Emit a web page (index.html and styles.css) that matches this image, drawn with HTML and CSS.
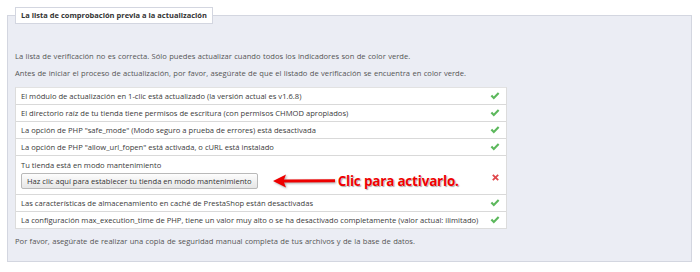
FILE: index.html
```html
<!DOCTYPE html>
<html lang="es">
<head>
<meta charset="utf-8">
<link rel="stylesheet" href="styles.css">
</head>
<body>
<fieldset class="panel">
  <legend class="legend">La lista de comprobación previa a la actualización</legend>
  <p class="msg msg-first">La lista de verificación no es correcta. Sólo puedes actualizar cuando todos los indicadores son de color verde.</p>
  <p class="msg">Antes de iniciar el proceso de actualización, por favor, asegúrate de que el listado de verificación se encuentra en color verde.</p>
  <div class="checklist">
    <div class="row">
      <span class="label">El módulo de actualización en 1-clic está actualizado (la versión actual es v1.6.8)</span>
      <svg class="ok" viewBox="0 0 10 8"><path d="M0.6 4.3 L2.2 2.8 L3.8 4.4 L7.9 0.3 L9.4 1.8 L3.8 7.4 Z"/></svg>
    </div>
    <div class="row">
      <span class="label">El directorio raíz de tu tienda tiene permisos de escritura (con permisos CHMOD apropiados)</span>
      <svg class="ok" viewBox="0 0 10 8"><path d="M0.6 4.3 L2.2 2.8 L3.8 4.4 L7.9 0.3 L9.4 1.8 L3.8 7.4 Z"/></svg>
    </div>
    <div class="row">
      <span class="label">La opción de PHP "safe_mode" (Modo seguro a prueba de errores) está desactivada</span>
      <svg class="ok" viewBox="0 0 10 8"><path d="M0.6 4.3 L2.2 2.8 L3.8 4.4 L7.9 0.3 L9.4 1.8 L3.8 7.4 Z"/></svg>
    </div>
    <div class="row">
      <span class="label">La opción de PHP "allow_url_fopen" está activada, o cURL está instalado</span>
      <svg class="ok" viewBox="0 0 10 8"><path d="M0.6 4.3 L2.2 2.8 L3.8 4.4 L7.9 0.3 L9.4 1.8 L3.8 7.4 Z"/></svg>
    </div>
    <div class="row row-tall">
      <div class="label-block">
        <span class="label">Tu tienda está en modo mantenimiento</span>
        <div class="action">
          <button class="btn" type="button">Haz clic aquí para establecer tu tienda en modo mantenimiento</button>
          <svg class="arrow" viewBox="0 0 62 14"><path d="M0 7 L13 0.5 L11 5.6 L62 5.2 L62 8.2 L11 8.6 L13 13.5 Z"/></svg>
          <span class="callout">Clic para activarlo.</span>
        </div>
      </div>
      <svg class="ko" viewBox="0 0 8 8"><path d="M1.6 0.2 L4 2.6 L6.4 0.2 L7.8 1.6 L5.4 4 L7.8 6.4 L6.4 7.8 L4 5.4 L1.6 7.8 L0.2 6.4 L2.6 4 L0.2 1.6 Z"/></svg>
    </div>
    <div class="row">
      <span class="label">Las características de almacenamiento en caché de PrestaShop están desactivadas</span>
      <svg class="ok" viewBox="0 0 10 8"><path d="M0.6 4.3 L2.2 2.8 L3.8 4.4 L7.9 0.3 L9.4 1.8 L3.8 7.4 Z"/></svg>
    </div>
    <div class="row">
      <span class="label">La configuración max_execution_time de PHP, tiene un valor muy alto o se ha desactivado completamente (valor actual: ilimitado)</span>
      <svg class="ok" viewBox="0 0 10 8"><path d="M0.6 4.3 L2.2 2.8 L3.8 4.4 L7.9 0.3 L9.4 1.8 L3.8 7.4 Z"/></svg>
    </div>
  </div>
  <p class="msg msg-last">Por favor, asegúrate de realizar una copia de seguridad manual completa de tus archivos y de la base de datos.</p>
</fieldset>
</body>
</html>
```
FILE: styles.css
```css
html, body {
  margin: 0;
  padding: 0;
  background: #ffffff;
}
body {
  font-family: "Open Sans", "DejaVu Sans", sans-serif;
  font-size: 7.6px;
  color: #555555;
  padding: 7px 8px 0 7px;
}
.panel {
  margin: 0;
  min-width: 0;
  border: 1px solid #d3d6e0;
  background: #ebedf4;
  padding: 10px 7px 12px 7px;
  height: 255px;
  box-sizing: border-box;
}
.legend {
  background: #ffffff;
  border: 1px solid #d3d6e0;
  padding: 0 5px;
  margin-left: 0;
  height: 17px;
  line-height: 15px;
  box-sizing: border-box;
  font-size: 7.5px;
  font-weight: 700;
  color: #333333;
}
.msg {
  margin: 0;
  line-height: 17px;
  word-spacing: 0.4px;
}
.msg-first {
  margin-top: 14px;
}
.msg-last {
  margin-top: 4px;
}
.checklist {
  width: 490px;
  margin-top: 5px;
  background: #ffffff;
  border: 1px solid #dcdcdc;
  border-top: 1px solid #e2e2e2;
}
.row {
  display: flex;
  align-items: center;
  justify-content: space-between;
  height: 16px;
  padding: 0 6px 0 5px;
  border-top: 1px solid #d9d9d9;
  color: #3a3a3a;
  white-space: nowrap;
}
.row:first-child {
  border-top: none;
}
.row-tall {
  height: 38px;
}
.label-block {
  display: flex;
  flex-direction: column;
  gap: 2px;
}
.action {
  display: flex;
  align-items: center;
}
.btn {
  font-family: "Open Sans", "DejaVu Sans", sans-serif;
  font-size: 7.6px;
  color: #333333;
  height: 16px;
  padding: 0 5px;
  border: 1px solid #b9b9b9;
  border-radius: 2px;
  background: linear-gradient(#fdfdfd, #e6e6e6);
  line-height: 14px;
  white-space: nowrap;
}
.arrow {
  width: 62px;
  height: 14px;
  margin-left: 15px;
  fill: #ee0000;
  filter: drop-shadow(1px 1px 1px rgba(0,0,0,0.35));
}
.callout {
  margin-left: 3px;
  font-family: "Open Sans", "DejaVu Sans", sans-serif;
  font-weight: 700;
  font-size: 13.5px;
  letter-spacing: -0.2px;
  color: #ee0000;
  text-shadow: 0 0 1px #ffffff, 1px 1px 1px rgba(0,0,0,0.35);
}
.ok {
  width: 10px;
  height: 8px;
  fill: #5cb85c;
  flex: none;
}
.ko {
  width: 7px;
  height: 7px;
  fill: #e0474c;
  flex: none;
  margin-right: 1px;
  margin-top: 4px;
}
```
